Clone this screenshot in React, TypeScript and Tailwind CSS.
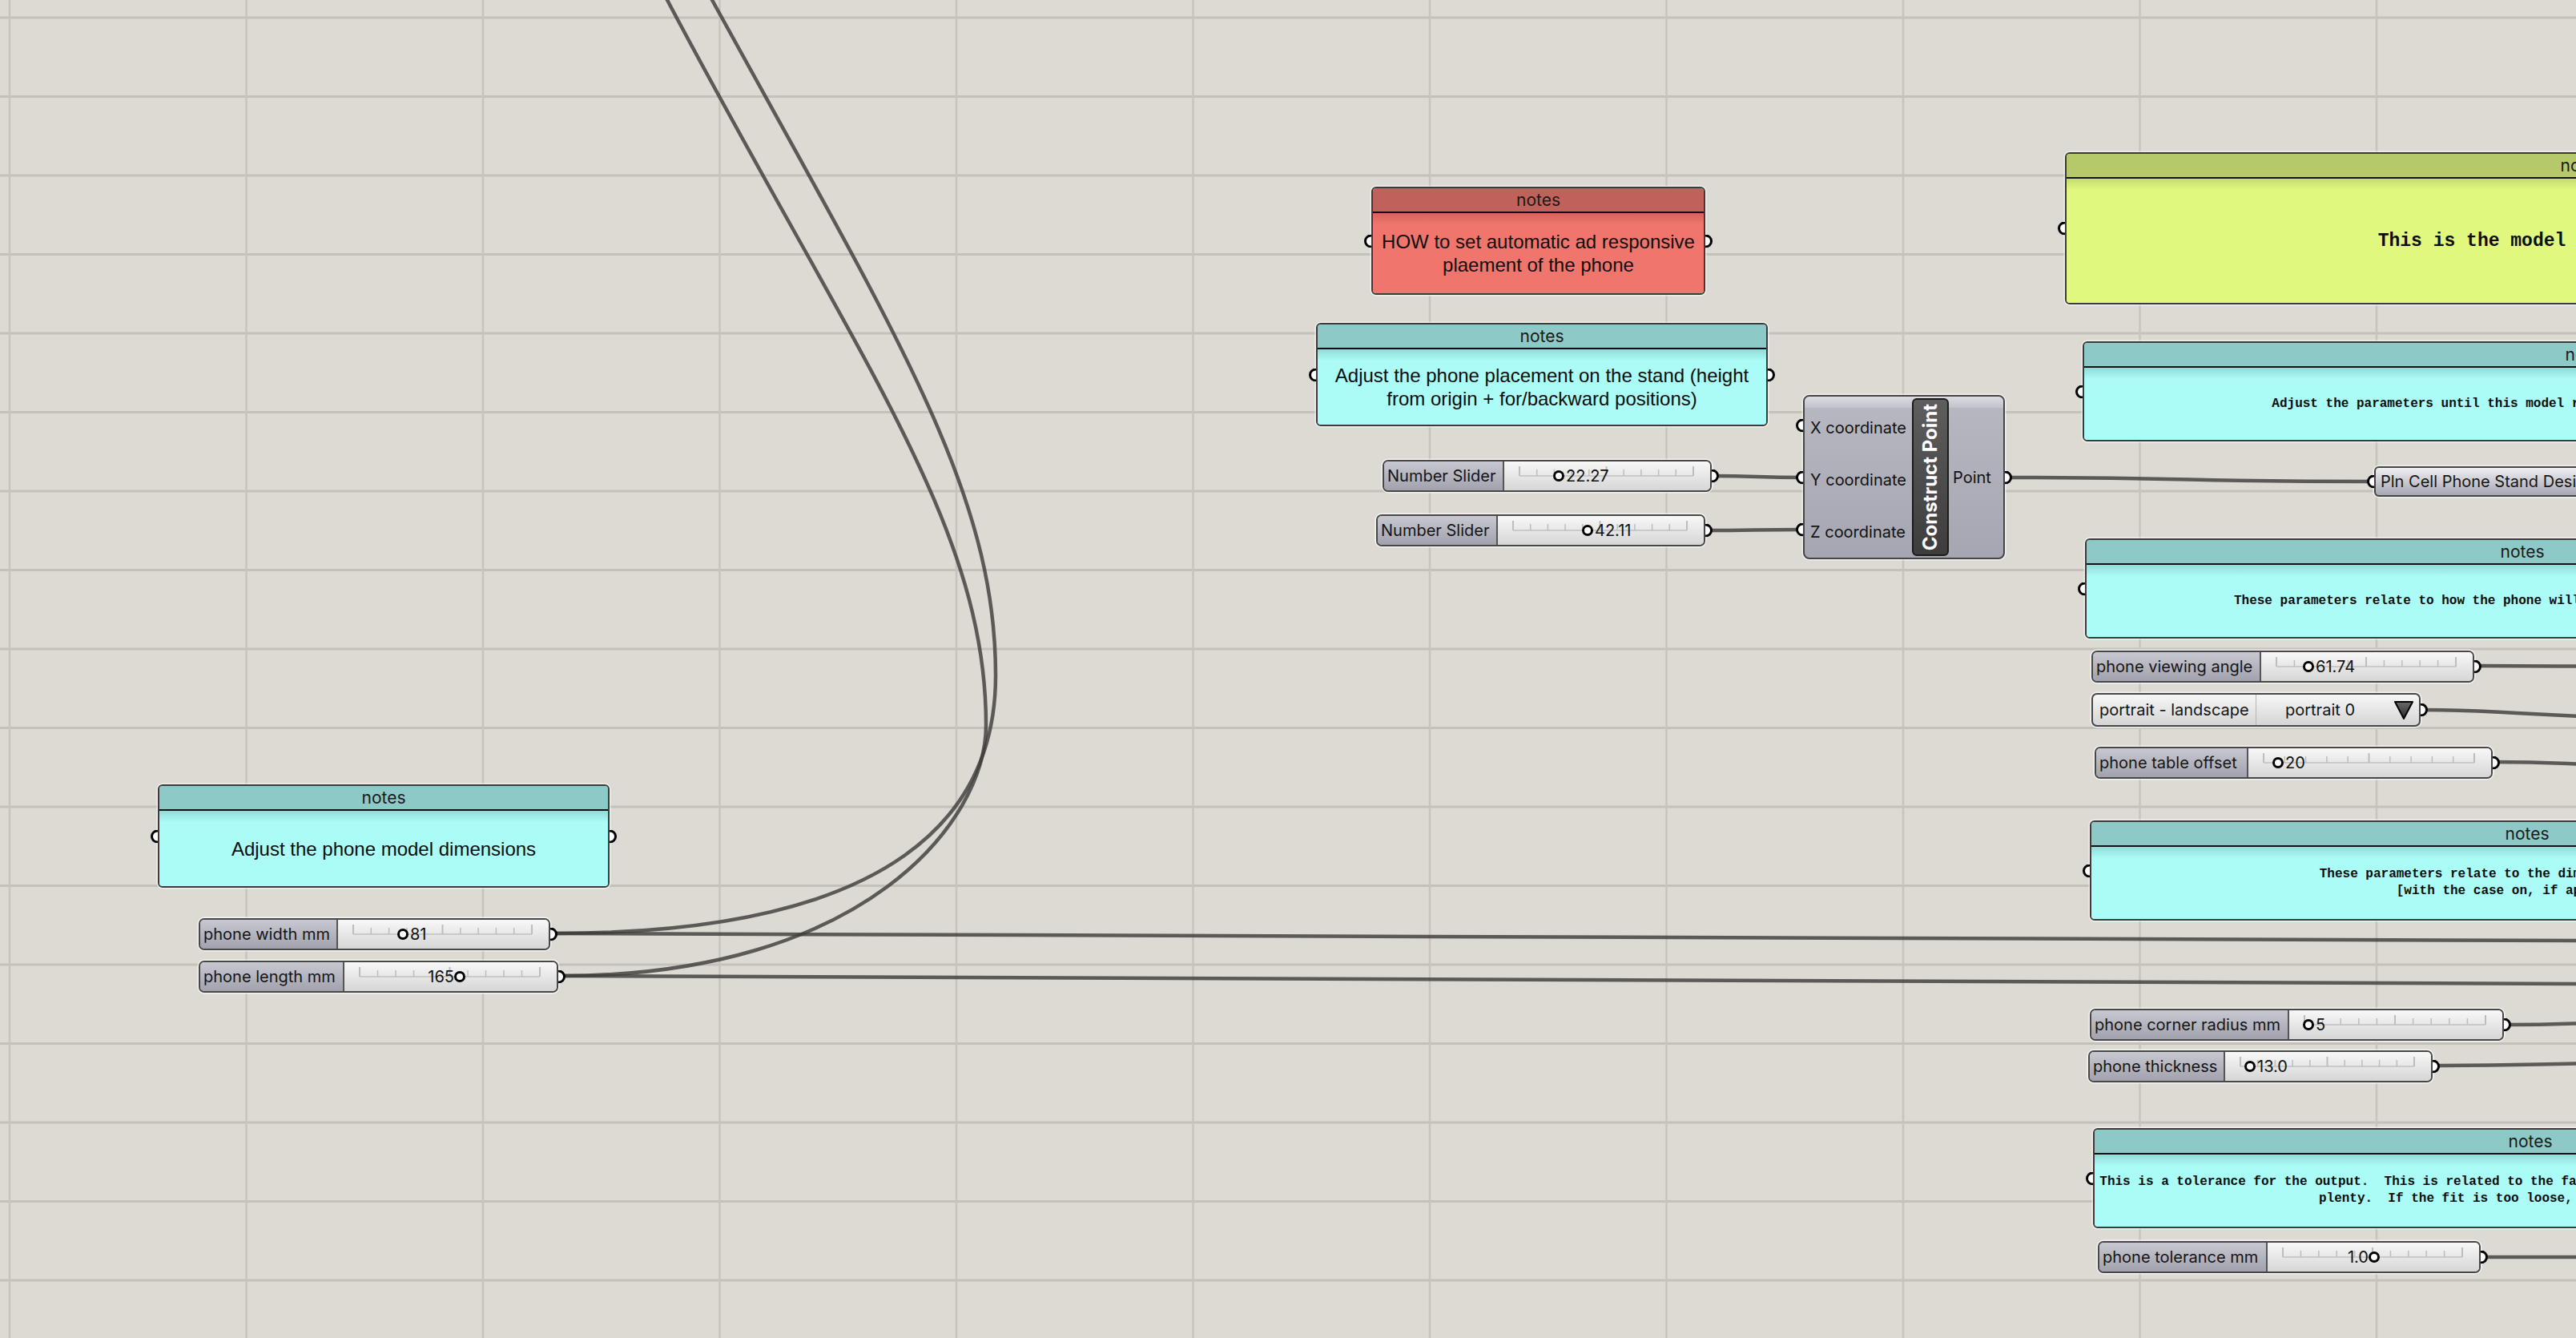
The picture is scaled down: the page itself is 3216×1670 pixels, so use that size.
import React from 'react';

const sans = "font-['Inter',sans-serif]";

const wire = (x0: number, y0: number, x1: number, y1: number) => {
  const d = Math.max(30, Math.abs(x1 - x0) / 2);
  return `M${x0} ${y0} C${x0 + d} ${y0} ${x1 - d} ${y1} ${x1} ${y1}`;
};

// the two long wires that leave the top of the canvas, hand fitted
const longWires = [
  // goes to phone length mm
  'M760 -170 C790 -110 810 -50 833 0 C1071 450 1231 655 1231 905 C1231 1025 1080 1218 700 1218',
  // goes to phone width mm
  'M820 -170 C850 -110 870 -50 889 0 C1120 420 1243 613 1243 843 C1243 1013 1123 1165 693 1165',
];

const wires = [
  wire(2137, 594, 2251, 596),
  wire(2129, 662, 2251, 661),
  wire(2503, 596, 2964, 601),
  wire(3089, 831, 3300, 832),
  `M3022 886 C3140 886 3160 896 3420 899`,
  wire(3112, 951, 3300, 955),
  wire(3126, 1279, 3300, 1276),
  wire(3037, 1330, 3300, 1327),
  wire(3097, 1569, 3300, 1569),
  `M690 1165 L3216 1174`,
  `M697 1218 L3216 1228`,
  ...longWires,
];

function Port({ side, top }: { side: 'left' | 'right'; top?: number }) {
  const cls =
    side === 'right'
      ? 'right-[-11px] rounded-r-full border-l-0'
      : 'left-[-11px] rounded-l-full border-r-0';
  return (
    <div
      className={`absolute z-10 h-[17px] w-[9px] -translate-y-1/2 border-[3px] border-black bg-white ${cls} ${top === undefined ? 'top-1/2' : ''}`}
      style={top === undefined ? undefined : { top }}
    />
  );
}

const tones = {
  red: { head: 'bg-[#c1615b]', band: 'from-[#d3645d] to-[#f0766d]', body: 'bg-[#f0766d]' },
  cyan: { head: 'bg-[#8dc9c6]', band: 'from-[#92dbd7] to-[#abfbf6]', body: 'bg-[#abfbf6]' },
  yellow: { head: 'bg-[#b5c96a]', band: 'from-[#c5dc70] to-[#e0f87d]', body: 'bg-[#e0f87d]' },
};

interface NoteProps {
  x: number;
  y: number;
  w: number;
  h: number;
  tone: keyof typeof tones;
  right?: boolean;
  mono?: boolean;
  big?: boolean;
  children: React.ReactNode;
}

function Note({ x, y, w, h, tone, right = false, mono = false, big = false, children }: NoteProps) {
  const t = tones[tone];
  const text = mono
    ? big
      ? "font-['Liberation_Mono',monospace] font-bold text-[23px] leading-[28px] whitespace-pre"
      : "font-['Liberation_Mono',monospace] font-bold text-[16px] leading-[21px] whitespace-pre"
    : "font-['Liberation_Sans',Arial,sans-serif] text-[24px] leading-[29px] whitespace-nowrap";
  return (
    <div
      className="absolute flex flex-col rounded-[6px] border-2 border-[#3b3b3b] shadow-[0_0_0_1.5px_rgba(255,255,255,0.6)]"
      style={{ left: x, top: y, width: w, height: h }}
    >
      <div
        className={`flex h-[31px] shrink-0 items-center justify-center rounded-t-[4px] border-b-2 border-[#111] text-[21px] text-[#1a1a1a] ${sans} ${t.head}`}
      >
        notes
      </div>
      <div className={`relative flex flex-1 items-center justify-center rounded-b-[4px] ${t.body}`}>
        <div className={`absolute inset-x-0 top-0 h-[14px] bg-linear-to-b ${t.band}`} />
        <div className={`relative text-center text-[#0d0d0d] ${text}`}>{children}</div>
      </div>
      <Port side="left" />
      {right && <Port side="right" />}
    </div>
  );
}

interface SliderProps {
  x: number;
  y: number;
  w: number;
  labelW: number;
  label: string;
  value: string;
  grip: number;
  before?: boolean;
}

function Slider({ x, y, w, labelW, label, value, grip, before = false }: SliderProps) {
  const vw = w - labelW - 4;
  const pad = 19;
  const step = (vw - pad * 2) / 10;
  const ticks = Array.from({ length: 11 }, (_, i) => i);
  return (
    <div
      className="absolute flex h-[40px] rounded-[7px] border-2 border-[#474747] shadow-[0_0_0_1.5px_rgba(255,255,255,0.7)]"
      style={{ left: x, top: y, width: w }}
    >
      <div
        className={`flex items-center whitespace-nowrap rounded-l-[5px] border-r-2 border-[#555] bg-linear-to-b from-[#c8c8d1] to-[#a2a2ae] pl-[4px] text-[20px] text-[#141414] ${sans}`}
        style={{ width: labelW - 2 }}
      >
        {label}
      </div>
      <div className="relative flex-1 rounded-r-[5px] bg-linear-to-b from-[#f8f8f8] to-[#d6d6d6]">
        <svg className="absolute left-0 top-0" width={vw} height={36}>
          <line x1={pad} x2={vw - pad} y1={18} y2={18} stroke="#c0c0c0" strokeWidth={1.5} />
          {ticks.map((i) => {
            const tx = pad + i * step;
            const major = i === 0 || i === 5 || i === 10;
            return (
              <line
                key={i}
                x1={tx}
                x2={tx}
                y1={major ? 6 : 10}
                y2={18}
                stroke="#bdbdbd"
                strokeWidth={major ? 2 : 1.5}
              />
            );
          })}
        </svg>
        <div
          className="absolute top-[11px] h-[14px] w-[14px] rounded-full border-[3px] border-black bg-white"
          style={{ left: grip - 7 }}
        />
        <div
          className={`absolute top-0 flex h-full items-center text-[20px] text-[#111] ${sans}`}
          style={before ? { right: vw - grip + 9 } : { left: grip + 9 }}
        >
          {value}
        </div>
      </div>
      <Port side="right" />
    </div>
  );
}

function ValueList() {
  return (
    <div
      className={`absolute flex h-[42px] rounded-[7px] border-2 border-[#474747] bg-linear-to-b from-[#f7f7f7] to-[#d5d5d5] text-[20px] text-[#141414] shadow-[0_0_0_1.5px_rgba(255,255,255,0.7)] ${sans}`}
      style={{ left: 2611, top: 865, width: 411 }}
    >
      <div className="flex w-[204px] items-center whitespace-nowrap border-r border-[#b5b5b5] pl-[8px]">
        portrait - landscape
      </div>
      <div className="flex flex-1 items-center justify-between pl-[36px] pr-[6px]">
        <span>portrait 0</span>
        <svg width="26" height="25" viewBox="0 0 26 25">
          <defs>
            <linearGradient id="tri" x1="0" y1="0" x2="0" y2="1">
              <stop offset="0" stopColor="#6a6a6a" />
              <stop offset="1" stopColor="#2a2a2a" />
            </linearGradient>
          </defs>
          <polygon points="2,2 24,2 13,23" fill="url(#tri)" stroke="#000" strokeWidth="2" strokeLinejoin="round" />
        </svg>
      </div>
      <Port side="right" />
    </div>
  );
}

function ConstructPoint() {
  const rows = ['X coordinate', 'Y coordinate', 'Z coordinate'];
  return (
    <div
      className={`absolute flex rounded-[8px] border-2 border-[#454545] bg-linear-to-b from-[#b8b8c2] to-[#a6a6b2] text-[20px] text-[#111] shadow-[0_0_0_1.5px_rgba(255,255,255,0.6)] ${sans}`}
      style={{ left: 2251, top: 493, width: 252, height: 205 }}
    >
      <div className="absolute inset-x-0 top-0 h-[14px] rounded-t-[6px] bg-linear-to-b from-[#dcdce2] to-[#c2c2cb]" />
      <div className="relative flex w-[134px] flex-col pl-[7px] pt-[6px]">
        {rows.map((r) => (
          <div key={r} className="flex flex-1 items-center whitespace-nowrap">
            {r}
          </div>
        ))}
      </div>
      <div className="relative my-[2px] flex w-[46px] items-center justify-center rounded-[6px] border-2 border-[#1c1c1c] bg-linear-to-b from-[#5e5e5e] to-[#3d3d3d]">
        <span className="rotate-180 whitespace-nowrap text-[24px] font-bold leading-none text-white [writing-mode:vertical-rl]">
          Construct Point
        </span>
      </div>
      <div className="relative flex flex-1 items-center pl-[5px]">Point</div>
      <Port side="left" top={36} />
      <Port side="left" top={101} />
      <Port side="left" top={166} />
      <Port side="right" top={101} />
    </div>
  );
}

function Canvas() {
  const vx = Array.from({ length: 11 }, (_, k) => 12 + 295.5 * k);
  const hy = Array.from({ length: 17 }, (_, k) => 22 + 98.5 * k);
  return (
    <svg className="absolute left-0 top-0" width={3216} height={1670}>
      {hy.map((y) => (
        <line key={`h${y}`} x1={0} x2={3216} y1={y} y2={y} stroke="#c4c1ba" strokeWidth={3} />
      ))}
      {vx.map((x) => (
        <line key={`v${x}`} x1={x} x2={x} y1={0} y2={1670} stroke="#c7c4bd" strokeWidth={2.5} />
      ))}
      {wires.map((d, i) => (
        <path key={i} d={d} fill="none" stroke="#3f3d3a" strokeOpacity={0.82} strokeWidth={4.5} />
      ))}
    </svg>
  );
}

export default function App() {
  return (
    <div className="relative h-[1670px] w-[3216px] overflow-hidden bg-[#dddad3]">
      <Canvas />

      <Note x={1712} y={233} w={417} h={135} tone="red" right>
        HOW to set automatic ad responsive
        <br />
        plaement of the phone
      </Note>

      <Note x={1643} y={403} w={564} h={129} tone="cyan" right>
        Adjust the phone placement on the stand (height
        <br />
        from origin + for/backward positions)
      </Note>

      <Slider x={1726} y={574} w={411} labelW={152} label="Number Slider" value="22.27" grip={68} />
      <Slider x={1718} y={642} w={411} labelW={152} label="Number Slider" value="42.11" grip={112} />

      <ConstructPoint />

      <div
        className={`absolute flex h-[38px] items-center whitespace-nowrap rounded-[6px] border-2 border-[#454545] bg-linear-to-b from-[#efeff3] to-[#a6a6b2] pl-[6px] text-[20px] text-[#151515] shadow-[0_0_0_1.5px_rgba(255,255,255,0.6)] ${sans}`}
        style={{ left: 2964, top: 582, width: 420 }}
      >
        Pln Cell Phone Stand Design
        <Port side="left" />
      </div>

      <Note x={2578} y={190} w={1292} h={190} tone="yellow" mono big>
        {'This is the model of your phone stand'}
      </Note>

      <Note x={2600} y={426} w={1260} h={125} tone="cyan" mono>
        {'Adjust the parameters until this model represents the phone you want to hold (mm).'}
      </Note>

      <Note x={2603} y={672} w={1092} h={125} tone="cyan" mono>
        {'These parameters relate to how the phone will sit on the stand when in use.'}
      </Note>

      <Slider x={2611} y={812} w={478} labelW={212} label="phone viewing angle" value="61.74" grip={59} />
      <ValueList />
      <Slider x={2615} y={932} w={497} labelW={192} label="phone table offset" value="20" grip={37} />

      <Note x={2609} y={1024} w={1092} h={125} tone="cyan" mono>
        {'These parameters relate to the dimensions of the phone\n[with the case on, if applicable].'}
      </Note>

      <Slider x={2609} y={1259} w={517} labelW={249} label="phone corner radius mm" value="5" grip={24} />
      <Slider x={2607} y={1311} w={430} labelW={171} label="phone thickness" value="13.0" grip={31} />

      <Note x={2613} y={1408} w={1092} h={125} tone="cyan" mono>
        {'This is a tolerance for the output.  This is related to the fabrication method.  For most 3D printers, 1.0 mm is\nplenty.  If the fit is too loose, reduce the tolerance.'}
      </Note>

      <Slider x={2619} y={1549} w={478} labelW={212} label="phone tolerance mm" value="1.0" grip={133} before />

      <Note x={197} y={979} w={564} h={129} tone="cyan" right>
        Adjust the phone model dimensions
      </Note>

      <Slider x={248} y={1146} w={439} labelW={174} label="phone width mm" value="81" grip={81} />
      <Slider x={248} y={1199} w={449} labelW={182} label="phone length mm" value="165" grip={144} before />
    </div>
  );
}
